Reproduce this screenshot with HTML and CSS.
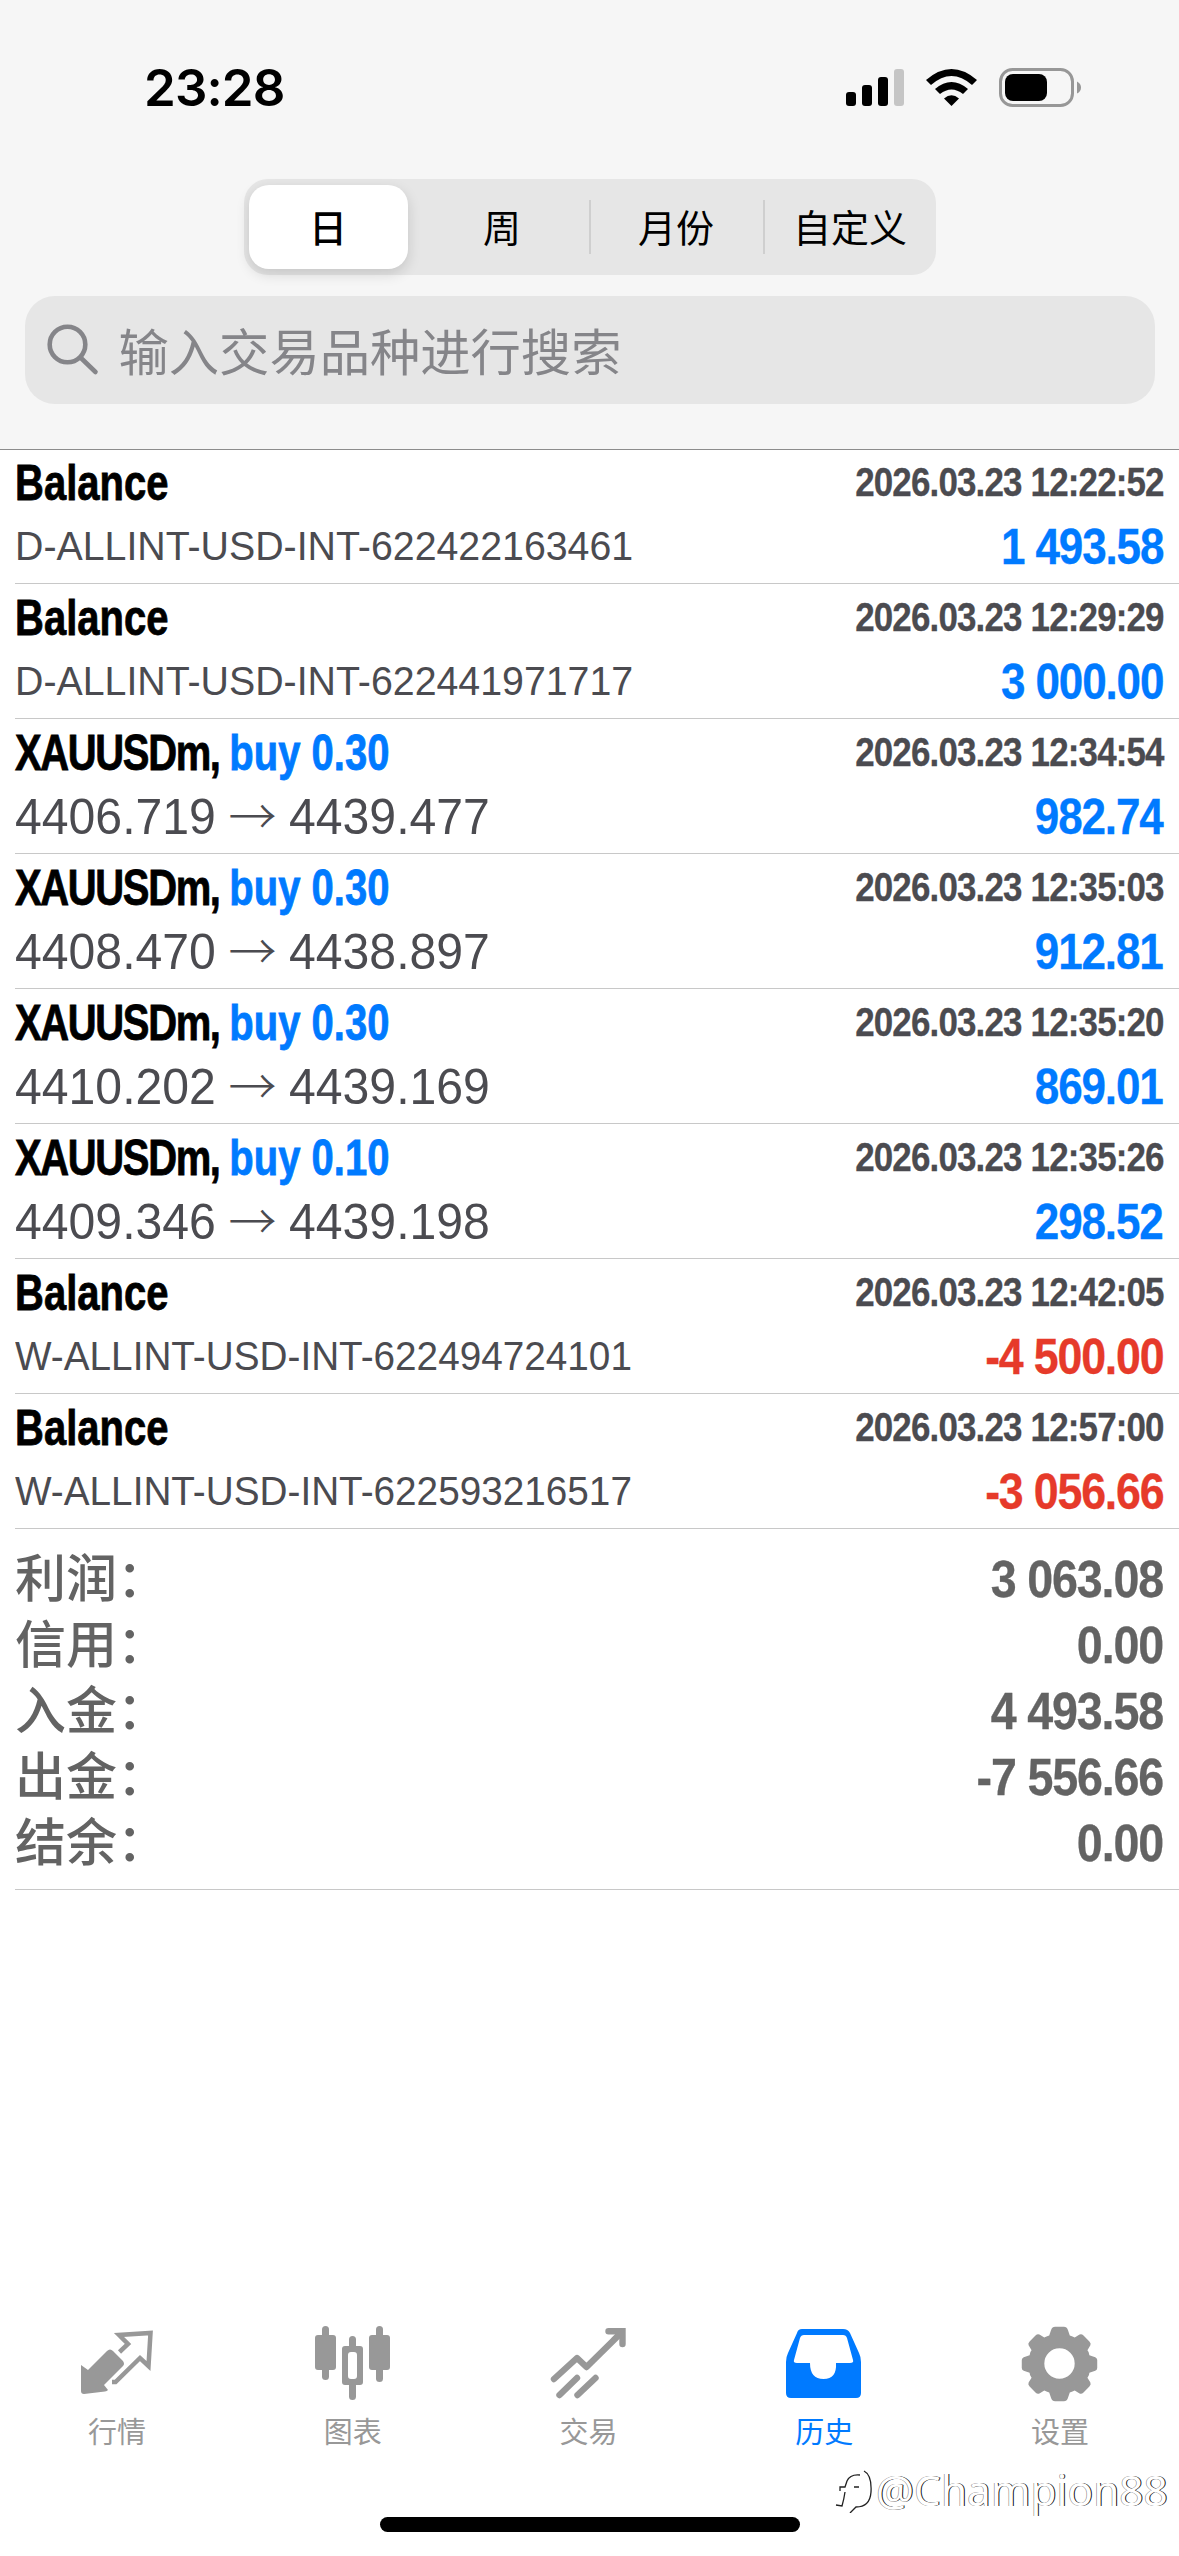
FILE: index.html
```html
<!DOCTYPE html>
<html lang="zh-CN">
<head>
<meta charset="utf-8">
<title>历史</title>
<link rel="stylesheet" href="styles.css">
</head>
<body>
<div class="app">
  <header class="header">
    <div class="status">
      <span class="clock">23:28</span>
      <svg class="status-icons" viewBox="0 0 236 40" width="236" height="40">
        <rect x="0" y="24" width="10" height="14" rx="3"/>
        <rect x="16" y="17" width="10" height="21" rx="3"/>
        <rect x="32" y="9" width="10" height="29" rx="3"/>
        <rect x="48" y="1" width="10" height="37" rx="3" fill="#c5c5c5"/>
        <path d="M80 12Q105.500-10 131 12L126 17Q105.500-1 85 17Z"/>
        <path d="M89 21Q105.500 7 122 21L117 26Q105.500 17 94 26Z"/>
        <path d="M98 30.500Q105.500 24 113 30.500L105.500 38Z"/>
        <rect x="154.500" y="1.500" width="72" height="36" rx="12" fill="none" stroke="#979797" stroke-width="3"/>
        <rect x="159" y="6" width="42" height="27" rx="8"/>
        <path d="M231 13.500Q235 15.500 235 19.500T231 25.500Z" fill="#979797"/>
      </svg>
    </div>
    <div class="segments">
      <button class="segment active">日</button>
      <button class="segment">周</button>
      <button class="segment divided">月份</button>
      <button class="segment divided">自定义</button>
    </div>
    <div class="search">
      <svg width="52" height="52" viewBox="0 0 52 52" fill="none" stroke="#858589" stroke-width="4.600" stroke-linecap="round"><circle cx="20.500" cy="20.500" r="17.800"/><path d="M34 34L48.500 48"/></svg>
      <span>输入交易品种进行搜索</span>
    </div>
  </header>

  <main class="history">
    <section class="deal"><div class="line"><span class="name">Balance</span><time>2026.03.23 12:22:52</time></div><div class="line second"><span class="ref">D-ALLINT-USD-INT-622422163461</span><span class="amount">1 493.58</span></div></section>
    <section class="deal"><div class="line"><span class="name">Balance</span><time>2026.03.23 12:29:29</time></div><div class="line second"><span class="ref">D-ALLINT-USD-INT-622441971717</span><span class="amount">3 000.00</span></div></section>
    <section class="deal"><div class="line"><span class="name"><span class="symbol">XAUUSDm, </span><span class="side">buy 0.30</span></span><time>2026.03.23 12:34:54</time></div><div class="line second"><span class="prices"><span>4406.719</span><i>→</i><span>4439.477</span></span><span class="amount">982.74</span></div></section>
    <section class="deal"><div class="line"><span class="name"><span class="symbol">XAUUSDm, </span><span class="side">buy 0.30</span></span><time>2026.03.23 12:35:03</time></div><div class="line second"><span class="prices"><span>4408.470</span><i>→</i><span>4438.897</span></span><span class="amount">912.81</span></div></section>
    <section class="deal"><div class="line"><span class="name"><span class="symbol">XAUUSDm, </span><span class="side">buy 0.30</span></span><time>2026.03.23 12:35:20</time></div><div class="line second"><span class="prices"><span>4410.202</span><i>→</i><span>4439.169</span></span><span class="amount">869.01</span></div></section>
    <section class="deal"><div class="line"><span class="name"><span class="symbol">XAUUSDm, </span><span class="side">buy 0.10</span></span><time>2026.03.23 12:35:26</time></div><div class="line second"><span class="prices"><span>4409.346</span><i>→</i><span>4439.198</span></span><span class="amount">298.52</span></div></section>
    <section class="deal"><div class="line"><span class="name">Balance</span><time>2026.03.23 12:42:05</time></div><div class="line second"><span class="ref withdrawal">W-ALLINT-USD-INT-622494724101</span><span class="amount loss">-4 500.00</span></div></section>
    <section class="deal"><div class="line"><span class="name">Balance</span><time>2026.03.23 12:57:00</time></div><div class="line second"><span class="ref withdrawal">W-ALLINT-USD-INT-622593216517</span><span class="amount loss">-3 056.66</span></div></section>
    <section class="totals">
      <div class="total"><span>利润：</span><b>3 063.08</b></div>
      <div class="total"><span>信用：</span><b>0.00</b></div>
      <div class="total"><span>入金：</span><b>4 493.58</b></div>
      <div class="total"><span>出金：</span><b>-7 556.66</b></div>
      <div class="total"><span>结余：</span><b>0.00</b></div>
    </section>
  </main>

  <nav class="tabs">
    <a class="tab">
      <svg width="80" height="80" viewBox="0 0 80 80"><path fill="currentColor" d="M4 37L11 42L30 23Q33 20 36 23L46 33Q48 36 46 38L27 57L31 62Q30 63 28 63.500L7 66Q4 66 4 63Z"/><path fill="none" stroke="currentColor" stroke-width="4.500" d="M42.500 24L51 16L42 7L73.500 5L71.500 38L63 30L38.500 54H35"/></svg>
      <span>行情</span>
    </a>
    <a class="tab">
      <svg width="80" height="80" viewBox="0 0 80 80" fill="currentColor"><rect x="2" y="7" width="21" height="35" rx="3"/><rect x="9" y="-2" width="7" height="54" rx="3.500"/><rect x="56" y="7" width="21" height="35" rx="3"/><rect x="63" y="-2" width="7" height="56" rx="3.500"/><path d="M36 18V11.500a3.500 3.500 0 0 1 7 0V18h4a3 3 0 0 1 3 3v33a3 3 0 0 1-3 3h-4v11.500a3.500 3.500 0 0 1-7 0V57h-4a3 3 0 0 1-3-3V21a3 3 0 0 1 3-3ZM38 24a3 3 0 0 0-3 3v21a3 3 0 0 0 3 3h3a3 3 0 0 0 3-3V27a3 3 0 0 0-3-3Z" fill-rule="evenodd"/></svg>
      <span>图表</span>
    </a>
    <a class="tab">
      <svg width="80" height="80" viewBox="0 0 80 80" fill="none" stroke="currentColor" stroke-width="6.400" stroke-linecap="round"><path stroke-linejoin="round" d="M6 51L29 30L38.500 39L72 6"/><path d="M60.500 3.200H74.500V16"/><path stroke-linecap="butt" stroke-width="5" d="M65 12L75 2"/><path d="M11.500 67L29 50M29.500 67L47.500 50"/></svg>
      <span>交易</span>
    </a>
    <a class="tab current">
      <svg width="80" height="80" viewBox="0 0 80 80"><path fill="currentColor" fill-rule="evenodd" d="M18 1H59Q64 1 66 5L75 25Q77 29 77 34V65Q77 70 72 70H7Q2 70 2 65V34Q2 29 4 25L13 5Q14 1 18 1ZM20 7Q17 7 16 10L10 32Q9 35 13 35H26Q26 51 39.500 51T52 35H66Q70 35 69 32L63 10Q62 7 59 7Z"/></svg>
      <span>历史</span>
    </a>
    <a class="tab">
      <svg width="80" height="80" viewBox="0 0 80 80"><path fill="currentColor" fill-rule="evenodd" transform="translate(39.500 35.500) scale(.98) translate(-39.500 -35.500)" d="M35 -2h9q3 0 4 3l2 6q3 1 5 2l5-3q2-1 4 1l6 6q2 2 1 4l-3 5q2 2 2 5l6 2q2 1 2 3v8q0 2-2 3l-6 2q0 3-2 5l3 5q1 2-1 4l-6 6q-2 2-4 1l-5-3q-2 1-5 2l-2 6q-1 3-4 3h-9q-3 0-4-3l-2-6q-3-1-5-2l-5 3q-2 1-4-1l-6-6q-2-2-1-4l3-5q-2-2-2-5l-6-2q-2-1-2-3v-8q0-2 2-3l6-2q0-3 2-5l-3-5q-1-2 1-4l6-6q2-2 4-1l5 3q2-1 5-2l2-6q1-3 4-3ZM39.500 20a15.500 15.500 0 1 0 0 31a15.500 15.500 0 1 0 0-31Z"/></svg>
      <span>设置</span>
    </a>
  </nav>
  <div class="home-indicator"></div>
  <div class="watermark">
    <svg width="42" height="46" viewBox="0 0 42 46" fill="none" stroke="#222" stroke-width="1.300"><path d="M26 8Q16 7 13 14L11 20H6V24M11 25Q10 32 8 39L2 38M30 4Q38 8 37 25Q36 40 22 40L16 46M20 20H25"/></svg>
    <span>@Champion88</span>
  </div>
</div>
</body>
</html>
```
FILE: styles.css
```css
* { box-sizing: border-box; }
body { margin: 0; background: #fff; font-family: "Liberation Sans", "Noto Sans CJK SC", sans-serif; }
.app { position: relative; width: 1179px; height: 2556px; display: flex; flex-direction: column; overflow: hidden; }

.header { height: 450px; background: #f6f6f6; border-bottom: 1px solid #8c8c8c; display: flex; flex-direction: column; align-items: center; }
.status { align-self: stretch; height: 179px; padding: 62px 97px 0 144px; display: flex; justify-content: space-between; align-items: flex-start; }
.clock { font: 600 51px/51px Inter, sans-serif; letter-spacing: -0.9px; }
.status-icons { margin-top: 6px; }

.segments { width: 692px; height: 96px; padding: 6px 0 6px 5px; border-radius: 24px; background: #e6e6e6; display: flex; gap: 15px; }
.segment { position: relative; width: 159px; border: 0; padding: 0; border-radius: 20px; background: none; font: 400 38px/81px "Noto Sans CJK SC", sans-serif; color: #000; display: flex; justify-content: center; }
.segment.active { background: #fff; font-weight: 500; box-shadow: 0 5px 14px rgba(0, 0, 0, 0.14); }
.segment.divided::before { content: ""; position: absolute; left: -8px; top: 15px; width: 2px; height: 54px; background: #cfcfcf; }

.search { width: 1130px; height: 108px; margin-top: 21px; padding: 0 22px; border-radius: 30px; background: #e6e6e6; display: flex; align-items: center; gap: 20px; }
.search span { padding-bottom: 3px; font: 400 50.3px/70px "Noto Sans CJK SC", sans-serif; color: #858589; }

.history { flex: 1; padding-left: 15px; margin-top: -1px; }
.deal { height: 135px; padding-right: 15px; border-bottom: 1px solid #c8c8c8; }
.line { height: 67px; display: flex; justify-content: space-between; align-items: flex-start; white-space: nowrap; }
.name { font-size: 49.5px; line-height: 67px; font-weight: 700; transform: scaleX(0.808); transform-origin: left; white-space: pre; -webkit-text-stroke: 0.8px; }
.symbol { letter-spacing: -1.7px; }
.side { color: #007aff; }
time { font-size: 41px; line-height: 66px; font-weight: 700; letter-spacing: -1px; color: #4b4b50; transform: scaleX(0.853); transform-origin: right; -webkit-text-stroke: 0.3px; }
.ref { font-size: 41.5px; line-height: 59px; color: #4b4b50; transform: scaleX(0.947); transform-origin: left; }
.ref.withdrawal { transform: scaleX(0.933); }
.amount { font-size: 49.5px; line-height: 61px; font-weight: 700; letter-spacing: -1.3px; margin-right: 1px; color: #007aff; transform: scaleX(0.89); transform-origin: right; -webkit-text-stroke: 0.3px; }
.loss { color: #e63a2a; transform: scaleX(0.903); }
.prices { display: flex; align-items: baseline; font-size: 49.5px; line-height: 61px; color: #4b4b50; }
.prices span { width: 201px; transform: scaleX(0.973); transform-origin: left; }
.prices i { width: 73px; text-align: center; font: 300 48px/40px "Noto Sans CJK SC", sans-serif; }

.totals { height: 361px; padding: 17px 15px 0 0; border-bottom: 1px solid #c8c8c8; }
.total { height: 66px; display: flex; justify-content: space-between; align-items: flex-start; line-height: 66px; color: #636363; }
.total span { font-size: 51px; font-weight: 500; line-height: 68px; }
.total b { font-size: 52.5px; line-height: 65px; letter-spacing: -1.3px; margin-right: 1px; transform: scaleX(0.888); transform-origin: right; -webkit-text-stroke: 0.3px; }

.tabs { height: 228px; display: grid; grid-template-columns: repeat(5, 1fr); }
.tab { display: flex; flex-direction: column; align-items: center; color: #989898; }
.tab svg { overflow: visible; margin-right: 2px; }
.tab span { margin-right: 2px; font: 400 29px/44px "Noto Sans CJK SC", sans-serif; }
.tab.current { color: #007aff; }

.home-indicator { position: absolute; left: 380px; top: 2517px; width: 420px; height: 15px; border-radius: 8px; background: #000; }
.watermark { position: absolute; left: 834px; top: 2467px; display: flex; align-items: flex-start; }
.watermark span { font: 400 42.4px/46px "Noto Sans", sans-serif; color: #fff; text-shadow: 1px 0 0 #111, -0.500px 0 0 #777; }
```
